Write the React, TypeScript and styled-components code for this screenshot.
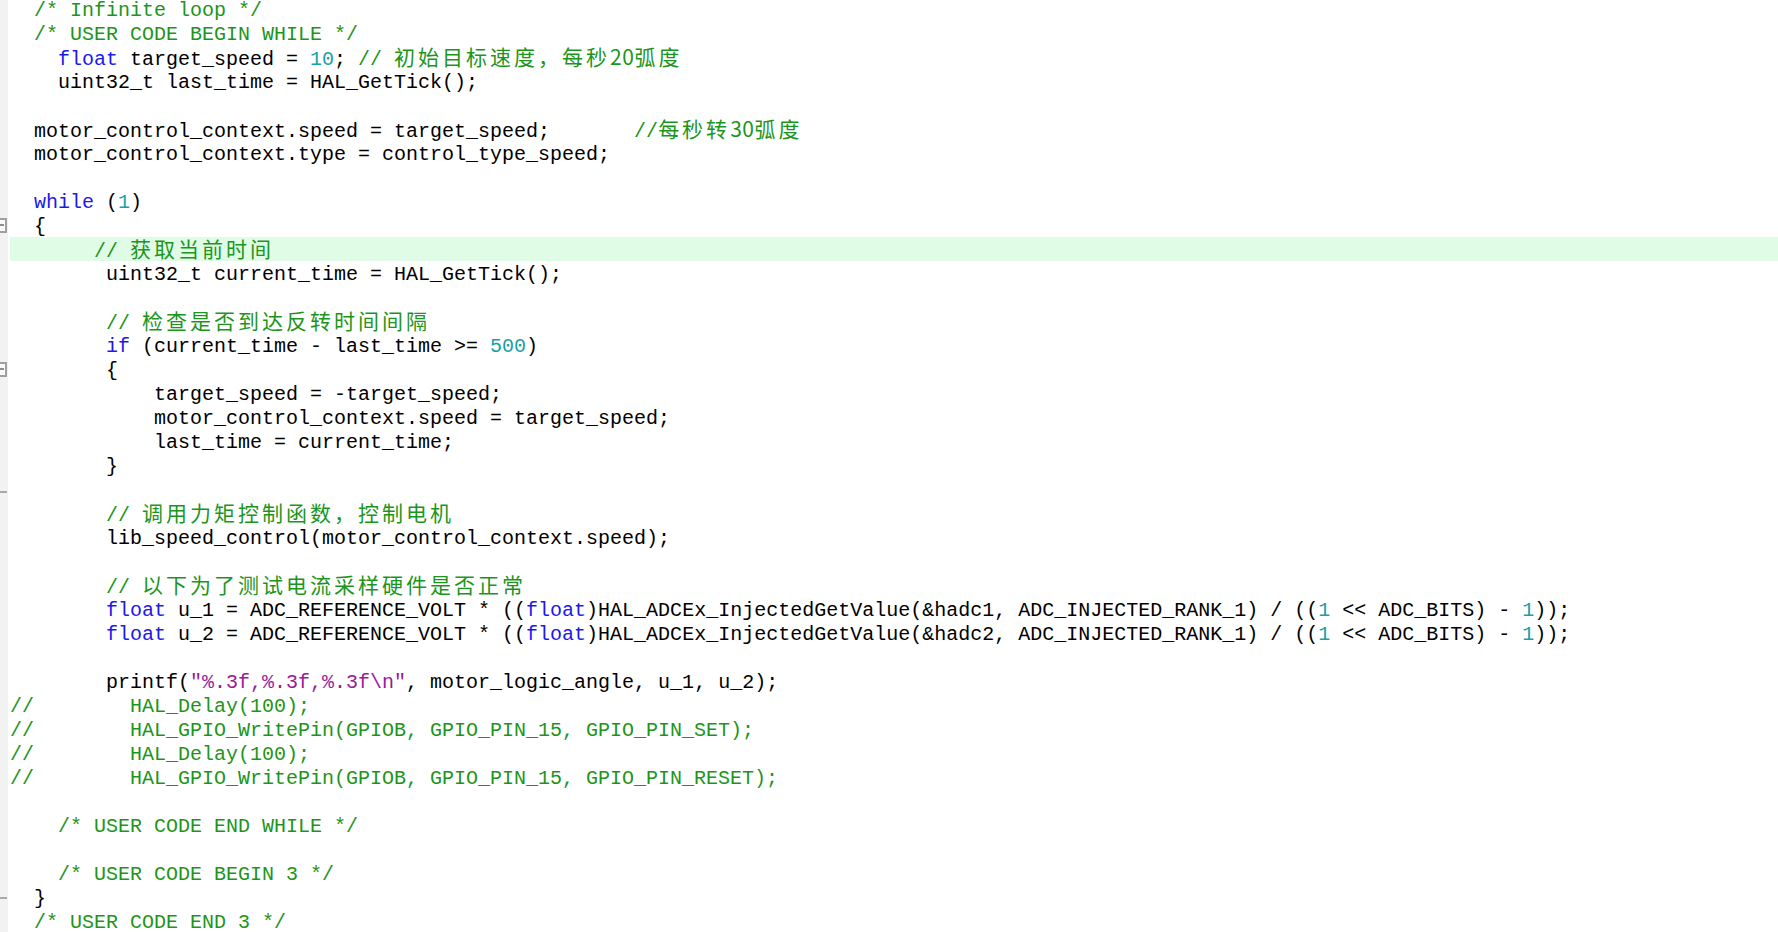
import React from "react";
import styled, { createGlobalStyle, css } from "styled-components";

const GlobalStyle = createGlobalStyle`
  html, body {
    margin: 0;
    padding: 0;
    background: #ffffff;
    overflow: hidden;
  }
  #root {
    width: 1778px;
    height: 932px;
    overflow: hidden;
  }
`;

type Kind = "plain" | "kw" | "num" | "str" | "cmt";

const colors: Record<Kind, string> = {
  plain: "#000000",
  kw: "#1a1aee",
  num: "#16a0a8",
  str: "#9a1a9a",
  cmt: "#1c951c",
};

const Editor = styled.div`
  display: flex;
  flex-direction: column;
  margin-top: -3px;
  font-family: "Liberation Mono", "Courier New", monospace;
  font-size: 20px;
  line-height: 24px;
  color: #000000;
`;

const Row = styled.div`
  display: flex;
  height: 24px;
  align-items: stretch;
`;

const Gutter = styled.div`
  width: 8px;
  flex: 0 0 8px;
  margin-right: 2px;
  background: #f2f2f2;
  display: flex;
  align-items: center;
  overflow: hidden;
`;

const FoldBox = styled.div`
  flex: 0 0 15px;
  height: 15px;
  margin-left: -8px;
  box-sizing: border-box;
  border: 2px solid #a0a0a0;
  display: flex;
  align-items: center;
  justify-content: center;
  background: #fafafa;
  &::after {
    content: "";
    width: 9px;
    height: 2px;
    background: #909090;
  }
`;

const FoldEnd = styled.div<{ $offset: number }>`
  width: 7px;
  height: 2px;
  background: #a8a8a8;
  margin-top: ${(p) => p.$offset}px;
`;

const Code = styled.div<{ $active?: boolean }>`
  flex: 1;
  box-sizing: border-box;
  padding-top: 2px;
  white-space: pre;
  ${(p) =>
    p.$active &&
    css`
      background: #e0fce6;
    `}
`;

const Tok = styled.span<{ $kind: Kind }>`
  color: ${(p) => colors[p.$kind]};
`;

const Cjk = styled.span`
  font-family: "Noto Sans CJK SC", "Noto Sans", sans-serif;
  font-size: 21px;
  line-height: 18px;
  letter-spacing: 3px;
  color: #1c951c;
`;

const Digits = styled.span`
  letter-spacing: 0.5px;
`;

const LINES: string[] = [
  "  /* Infinite loop */",
  "  /* USER CODE BEGIN WHILE */",
  "    float target_speed = 10; // 初始目标速度，每秒20弧度",
  "    uint32_t last_time = HAL_GetTick();",
  "",
  "  motor_control_context.speed = target_speed;       //每秒转30弧度",
  "  motor_control_context.type = control_type_speed;",
  "",
  "  while (1)",
  "  {",
  "       // 获取当前时间",
  "        uint32_t current_time = HAL_GetTick();",
  "",
  "        // 检查是否到达反转时间间隔",
  "        if (current_time - last_time >= 500)",
  "        {",
  "            target_speed = -target_speed;",
  "            motor_control_context.speed = target_speed;",
  "            last_time = current_time;",
  "        }",
  "",
  "        // 调用力矩控制函数，控制电机",
  "        lib_speed_control(motor_control_context.speed);",
  "",
  "        // 以下为了测试电流采样硬件是否正常",
  "        float u_1 = ADC_REFERENCE_VOLT * ((float)HAL_ADCEx_InjectedGetValue(&hadc1, ADC_INJECTED_RANK_1) / ((1 << ADC_BITS) - 1));",
  "        float u_2 = ADC_REFERENCE_VOLT * ((float)HAL_ADCEx_InjectedGetValue(&hadc2, ADC_INJECTED_RANK_1) / ((1 << ADC_BITS) - 1));",
  "",
  '        printf("%.3f,%.3f,%.3f\\n", motor_logic_angle, u_1, u_2);',
  "//        HAL_Delay(100);",
  "//        HAL_GPIO_WritePin(GPIOB, GPIO_PIN_15, GPIO_PIN_SET);",
  "//        HAL_Delay(100);",
  "//        HAL_GPIO_WritePin(GPIOB, GPIO_PIN_15, GPIO_PIN_RESET);",
  "",
  "    /* USER CODE END WHILE */",
  "",
  "    /* USER CODE BEGIN 3 */",
  "  }",
  "  /* USER CODE END 3 */",
];

const KEYWORDS = new Set(["float", "while", "if"]);
const CJK_RE = /[\u3000-\u9fff\uff00-\uffef]/;

function renderCjk(text: string, key: string): React.ReactNode {
  const parts = text.split(/(\d+)/).filter((s) => s.length > 0);
  return (
    <Cjk key={key}>
      {parts.map((p, i) => (/^\d+$/.test(p) ? <Digits key={i}>{p}</Digits> : p))}
    </Cjk>
  );
}

function renderComment(text: string, key: string): React.ReactNode[] {
  const idx = text.search(CJK_RE);
  if (idx < 0) {
    return [
      <Tok key={key} $kind="cmt">
        {text}
      </Tok>,
    ];
  }
  return [
    <Tok key={key + "a"} $kind="cmt">
      {text.slice(0, idx)}
    </Tok>,
    renderCjk(text.slice(idx), key + "b"),
  ];
}

function tokenize(line: string): React.ReactNode[] {
  const out: React.ReactNode[] = [];
  let i = 0;
  let plain = "";
  let k = 0;
  const flush = () => {
    if (plain) {
      out.push(
        <Tok key={"p" + k++} $kind="plain">
          {plain}
        </Tok>
      );
      plain = "";
    }
  };
  while (i < line.length) {
    const rest = line.slice(i);
    if (rest.startsWith("//") || rest.startsWith("/*")) {
      flush();
      out.push(...renderComment(rest, "c" + k++));
      break;
    }
    const ch = line[i];
    if (ch === '"') {
      const end = line.indexOf('"', i + 1);
      flush();
      out.push(
        <Tok key={"s" + k++} $kind="str">
          {line.slice(i, end + 1)}
        </Tok>
      );
      i = end + 1;
      continue;
    }
    const id = /^[A-Za-z_][A-Za-z0-9_]*/.exec(rest);
    if (id) {
      if (KEYWORDS.has(id[0])) {
        flush();
        out.push(
          <Tok key={"k" + k++} $kind="kw">
            {id[0]}
          </Tok>
        );
      } else {
        plain += id[0];
      }
      i += id[0].length;
      continue;
    }
    const num = /^\d+/.exec(rest);
    if (num) {
      flush();
      out.push(
        <Tok key={"n" + k++} $kind="num">
          {num[0]}
        </Tok>
      );
      i += num[0].length;
      continue;
    }
    plain += ch;
    i++;
  }
  flush();
  return out;
}

const FOLD_START = new Set([9, 15]);
const FOLD_END: Record<number, number> = { 20: 5, 37: 2 };
const ACTIVE_LINE = 10;

export default function App() {
  return (
    <>
      <GlobalStyle />
      <Editor>
        {LINES.map((line, n) => (
          <Row key={n}>
            <Gutter>
              {FOLD_START.has(n) && <FoldBox />}
              {FOLD_END[n] !== undefined && <FoldEnd $offset={FOLD_END[n]} />}
            </Gutter>
            <Code $active={n === ACTIVE_LINE}>{line ? tokenize(line) : " "}</Code>
          </Row>
        ))}
      </Editor>
    </>
  );
}
